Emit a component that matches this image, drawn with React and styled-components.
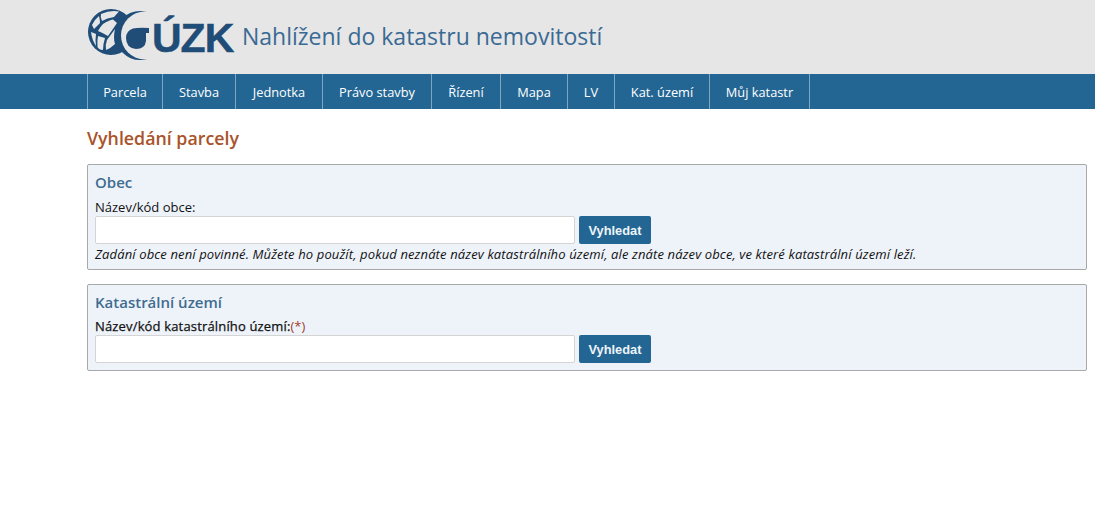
import React from 'react';
import styled, { createGlobalStyle } from 'styled-components';

const Global = createGlobalStyle`
  html, body { margin: 0; padding: 0; background: #fff; }
  body { font-family: "Open Sans", "Noto Sans", sans-serif; font-size: 13px; color: #111; }
`;
const Header = styled.header`
  height: 74px; background: #e6e6e6; padding-left: 87px; display: flex; box-sizing: border-box;
`;
const Logo = styled.div`
  display: flex; align-items: flex-start; width: 155px; color: #1f4d78; padding-top: 5px; box-sizing: border-box;
`;
const LogoWord = styled.span`
  font-family: "Liberation Sans", sans-serif; font-weight: 700; font-size: 41px; letter-spacing: -1px; line-height: 1; margin-top: 13px; -webkit-text-stroke: 0.5px #1f4d78;
`;
const Title = styled.div`
  font-size: 23px; color: #3a6a94; line-height: 74px; margin-top: -1px;
`;
const Nav = styled.nav`
  height: 35px; background: #236693; padding-left: 87px; display: flex;
`;
const NavItem = styled.a`
  display: flex; align-items: center; justify-content: center; box-sizing: border-box; width: ${p => p.$w}px; color: #fff; font-size: 12.8px; border-left: 1px solid #7fa5bf;
  &:last-child { border-right: 1px solid #7fa5bf; }
`;
const Main = styled.main`
  padding: 17px 8px 0 87px;
`;
const H1 = styled.h1`
  margin: 0 0 14px; font-size: 17.8px; line-height: 24px; font-weight: 600; color: #a9532a;
`;
const Panel = styled.section`
  background: #eef3fa; border: 1px solid #a8a8a8; border-radius: 2px; padding: 7px 7px 7px; margin-bottom: 14px;
`;
const H2 = styled.h2`
  margin: 0 0 ${p => (p.$tight ? 7 : 8)}px; font-size: 15px; line-height: 20px; font-weight: 600; color: #3f6c8f;
`;
const Label = styled.div`
  font-size: 13px; line-height: 14px; margin-bottom: 2px; font-weight: 400;
  ${p => p.$strong && '-webkit-text-stroke: 0.25px #111; letter-spacing: 0.16px;'}
`;
const Req = styled.span` color: #a0412a; -webkit-text-stroke: 0; letter-spacing: 0; `;
const Row = styled.div` display: flex; gap: 4px; `;
const Input = styled.input`
  width: 480px; height: 28px; box-sizing: border-box; border: 1px solid #d4d4d4; border-radius: 2px; background: #fff; padding: 0; margin: 0;
`;
const Button = styled.button`
  width: 72px; height: 28px; border: 0; border-radius: 2px; background: #236693; color: #eef5fa; font-family: "Liberation Sans", sans-serif; font-weight: 700; font-size: 12.8px; padding: 0;
`;
const Hint = styled.div`
  font-size: 13px; line-height: 16px; font-style: italic; margin-top: 2px; letter-spacing: 0.13px;
`;

const Globe = () => (
  <svg width="65" height="60" viewBox="87 5 65 60" aria-hidden="true">
    <circle cx="111" cy="32" r="23" fill="#1f4d78" />
    <path
      d="M101 14 Q110 10 119 11.5 L114 17 Q107 18 102 21 Q100 17 101 14Z
         M92 25 Q95 19 99 16 Q100 20 100 23 L94 29Z
         M103 24 Q109 20 113 19.5 L117 23 Q113 29 108 36 Q103 33 98 31 Q100 27 103 24Z
         M91 32 L96 34 Q95 40 96 46 Q92 40 91 32Z
         M98 36 L105 38 Q103 44 103 50 Q99 50 97.5 47 Q97 41 98 36Z
         M107 40 L115 29 Q113 38 115 44 Q111 48 106 50 Q105 45 107 40Z"
      fill="#e6e6e6"
    />
    <circle cx="140" cy="35.5" r="24.5" fill="#1f4d78" />
    <circle cx="145" cy="35.5" r="24" fill="#e6e6e6" />
    <path d="M133 28.5 Q138 27.5 149 28 L149 33 Q147 33 146 33 L146 41 Q145 49 136 49 Q126 48 126 38 Q126 31 133 28.5Z" fill="#1f4d78" />
  </svg>
);

const items = [['Parcela',75],['Stavba',73],['Jednotka',87],['Právo stavby',109],['Řízení',69],['Mapa',67],['LV',47],['Kat. území',95],['Můj katastr',101]];

export default function App() {
  return (
    <>
      <Global />
      <Header>
        <Logo><Globe /><LogoWord>ÚZK</LogoWord></Logo>
        <Title>Nahlížení do katastru nemovitostí</Title>
      </Header>
      <Nav>{items.map(([t, w]) => <NavItem key={t} $w={w}>{t}</NavItem>)}</Nav>
      <Main>
        <H1>Vyhledání parcely</H1>
        <Panel>
          <H2>Obec</H2>
          <Label>Název/kód obce:</Label>
          <Row><Input /><Button>Vyhledat</Button></Row>
          <Hint>Zadání obce není povinné. Můžete ho použít, pokud neznáte název katastrálního území, ale znáte název obce, ve které katastrální území leží.</Hint>
        </Panel>
        <Panel>
          <H2 $tight>Katastrální území</H2>
          <Label $strong>Název/kód katastrálního území:<Req>(*)</Req></Label>
          <Row><Input /><Button>Vyhledat</Button></Row>
        </Panel>
      </Main>
    </>
  );
}
